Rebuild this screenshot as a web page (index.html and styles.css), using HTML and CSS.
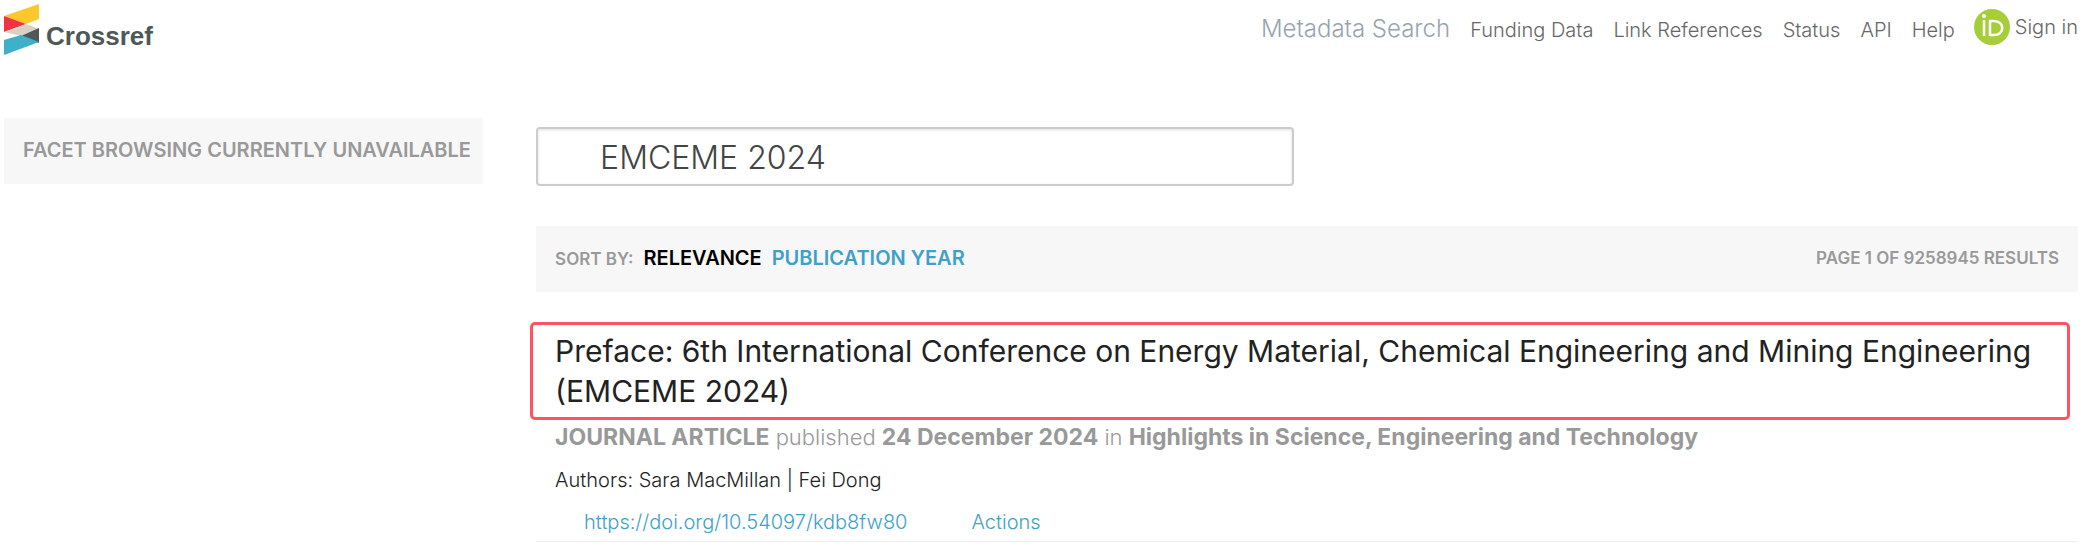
FILE: index.html
```html
<!doctype html>
<html lang="en">
<head>
<meta charset="UTF-8" />
<title>Crossref Metadata Search</title>
<link rel="stylesheet" href="styles.css">
</head>
<body>
	<header id="header">
		<a href="#" class="logo" aria-label="Crossref">
			<svg width="152" height="52" viewBox="0 0 152 52">
				<path fill="#ffc72c" d="M0 16L35 4V19L22 24Z"/>
				<path fill="#ef3340" d="M0 16L22 24L0 32Z"/>
				<path fill="#d8d2c4" d="M0 32L22 24L35 29L17 36Z"/>
				<path fill="#4f5858" d="M17 36L35 28V43Z"/>
				<path fill="#3eb1c8" d="M0 40L17 35L35 42L0 55Z"/>
				<text x="42" y="45">Crossref</text>
			</svg>
		</a>
		<nav class="nav">
			<div class="menu">
				<a href="#" class="current">Metadata Search</a>
				<a href="#">Funding Data</a>
				<a href="#">Link References</a>
				<a href="#">Status</a>
				<a href="#">API</a>
				<a href="#">Help</a>
			</div>
			<a href="#" class="sign-in">
				<svg width="36" height="36" viewBox="0 0 36 36">
					<circle cx="18" cy="18" r="18" fill="#a6ce39"/>
					<circle cx="10" cy="7" r="2" fill="#fff"/>
					<path d="M10 11V27M16 12H20C31 12 31 26 20 26H16Z" fill="none" stroke="#fff" stroke-width="2.5"/>
				</svg>
				<span>Sign in</span>
			</a>
		</nav>
	</header>
	<div id="wrapper">
		<aside class="bar facets">FACET BROWSING CURRENTLY UNAVAILABLE</aside>
		<main id="main">
			<form id="search-form">
				<input type="text" id="search" value="EMCEME 2024" aria-label="Search" />
			</form>
			<div class="bar sort">
				<div class="sort-by">
					<span class="small">SORT BY:</span>
					<a href="#" class="active">RELEVANCE</a>
					<a href="#">PUBLICATION YEAR</a>
				</div>
				<span class="small">PAGE 1 OF 9258945 RESULTS</span>
			</div>
			<article class="item">
				<h2 class="title">Preface: 6th International Conference on Energy Material, Chemical Engineering and Mining Engineering (EMCEME 2024)</h2>
				<p class="extra"><b>JOURNAL ARTICLE</b> published <b>24 December 2024</b> in <b>Highlights in Science, Engineering and Technology</b></p>
				<p class="authors">Authors: Sara MacMillan | Fei Dong</p>
				<div class="links">
					<a href="#">https://doi.org/10.54097/kdb8fw80</a>
					<a href="#">Actions</a>
				</div>
			</article>
		</main>
	</div>
</body>
</html>
```
FILE: styles.css
```css
*{
	box-sizing:border-box;
}
html, body, h2, p{
	margin:0;
	padding:0;
}
body{
	font:300 20px/28px Inter, "Liberation Sans", sans-serif;
	color:#222;
	background:#fff;
}
a{
	color:#3ea1c9;
	text-decoration:none;
}
#header{
	display:flex;
	justify-content:space-between;
	align-items:flex-start;
	padding:0 8px 0 4px;
}
.logo svg{
	display:block;
	overflow:visible;
}
.logo text{
	font:bold 26px "Liberation Sans", sans-serif;
	fill:#4f5858;
}
.nav{
	display:flex;
	align-items:center;
	gap:19px;
	padding-top:9px;
}
.menu{
	display:flex;
	align-items:baseline;
	gap:20px;
	padding-top:4px;
}
.nav a{
	color:#666;
}
.nav .current{
	font-size:24px;
	color:#98a4ae;
}
.nav .sign-in{
	display:flex;
	align-items:center;
	gap:5px;
}
#wrapper{
	display:flex;
	align-items:flex-start;
	padding:66px 8px 0 4px;
}
.bar{
	padding:18px 19px 20px;
	background:#f7f7f7;
	color:#999;
	font-weight:600;
}
.facets{
	flex:0 0 23.1%;
	padding-right:0;
	white-space:nowrap;
}
#main{
	flex:1;
	margin-left:53px;
	padding-top:9px;
}
#search{
	display:block;
	width:758px;
	max-width:100%;
	height:59px;
	padding:2px 62px 0;
	border:2px solid #ccc;
	border-radius:4px;
	box-shadow:inset 0 1px 3px rgba(0, 0, 0, .12);
	font:300 32px Inter, "Liberation Sans", sans-serif;
	color:#444;
}
.sort{
	display:flex;
	justify-content:space-between;
	margin-top:40px;
}
.sort-by{
	display:flex;
	align-items:baseline;
	gap:10px;
	height:28px;
}
.sort .active{
	color:#000;
}
.small{
	font-size:17px;
}
.item{
	margin-top:30px;
	padding-bottom:5px;
	border-bottom:1px solid #eee;
}
.title{
	margin:0 8px 0 -6px;
	padding:6px 19px 6px 22px;
	border:3px solid #ff5263;
	border-radius:5px;
	font-size:30px;
	font-weight:400;
	line-height:40px;
}
.extra, .authors{
	padding-left:19px;
}
.extra{
	padding-top:3px;
	font-size:22px;
	color:#999;
}
.extra b{
	font-size:23px;
	font-weight:700;
}
.authors{
	padding-top:15px;
}
.links{
	display:flex;
	gap:64px;
	padding:14px 0 0 48px;
}
```
